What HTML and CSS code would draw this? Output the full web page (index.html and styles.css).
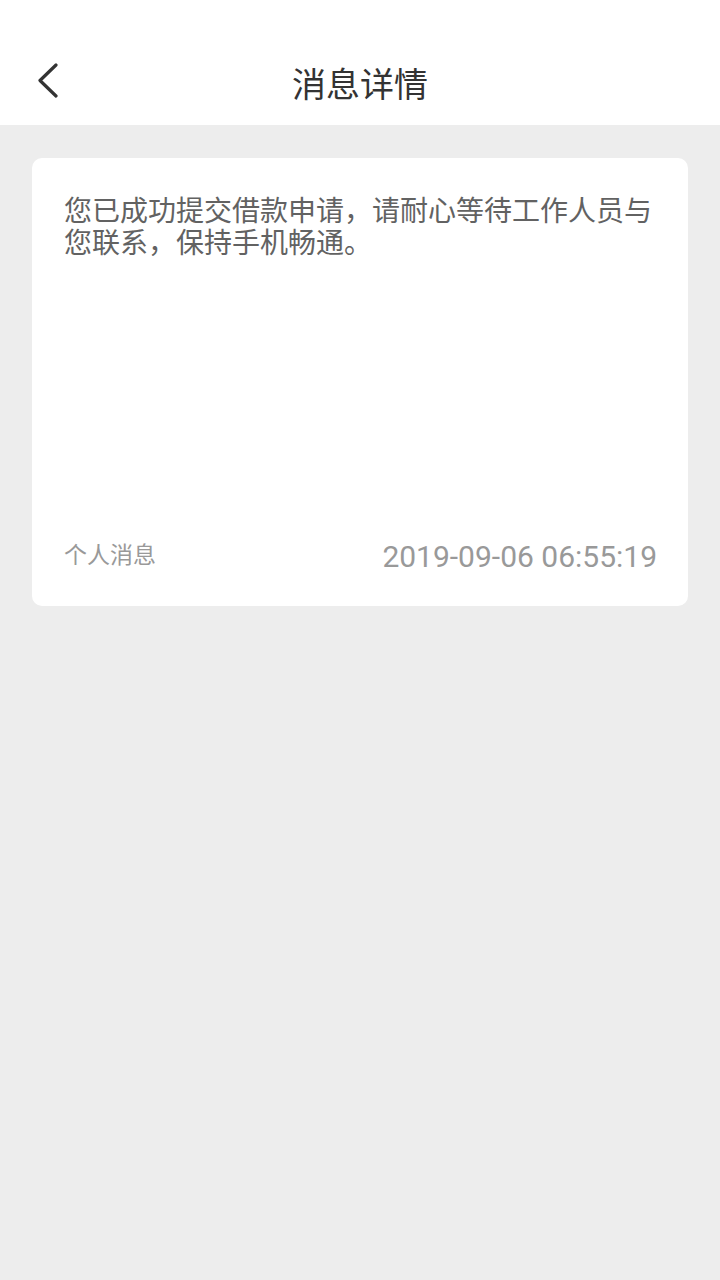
FILE: index.html
```html
<!DOCTYPE html>
<html lang="zh-CN">
<head>
<meta charset="utf-8">
<meta name="viewport" content="width=720">
<link rel="stylesheet" href="styles.css">
<title>消息详情</title>
</head>
<body>
<header class="topbar">
  <div class="back">
    <svg width="24" height="40" viewBox="0 0 24 40"><polyline points="19,2 3,17.5 19,33" fill="none" stroke="#333" stroke-width="3.2" stroke-linecap="round" stroke-linejoin="round"/></svg>
  </div>
  <h1 class="title">消息详情</h1>
</header>
<main class="content">
  <section class="card">
    <p class="message">您已成功提交借款申请，请耐心等待工作人员与您联系，保持手机畅通。</p>
    <div class="meta">
      <span class="type">个人消息</span>
      <span class="time">2019-09-06 06:55:19</span>
    </div>
  </section>
</main>
</body>
</html>
```
FILE: styles.css
```css
html, body {
  margin: 0;
  padding: 0;
}
body {
  width: 720px;
  min-height: 1280px;
  background: #ededed;
  font-family: "Noto Sans CJK SC", "Noto Sans", sans-serif;
}
.topbar {
  height: 125px;
  background: #fff;
  display: flex;
  align-items: center;
  justify-content: center;
  position: relative;
}
.back {
  position: absolute;
  left: 37px;
  top: 63px;
  width: 24px;
  height: 40px;
}
.back svg { display: block; }
.title {
  margin: 0;
  padding-top: 40px;
  font-size: 34px;
  font-weight: 400;
  color: #333;
  line-height: 1;
}
.content {
  padding: 33px 32px 0;
}
.card {
  background: #fff;
  border-radius: 10px;
  height: 448px;
  box-sizing: border-box;
  padding: 35px 32px 34px;
  display: flex;
  flex-direction: column;
}
.message {
  margin: 0;
  flex: 1;
  font-size: 28px;
  line-height: 32px;
  color: #626262;
}
.meta {
  display: flex;
  justify-content: space-between;
  align-items: center;
  height: 30px;
}
.type {
  font-size: 23px;
  color: #999;
  line-height: 30px;
  margin-top: -8px;
}
.time {
  font-family: Roboto, "Noto Sans", sans-serif;
  font-size: 30px;
  color: #999;
  line-height: 30px;
  margin-right: -1px;
}
```
